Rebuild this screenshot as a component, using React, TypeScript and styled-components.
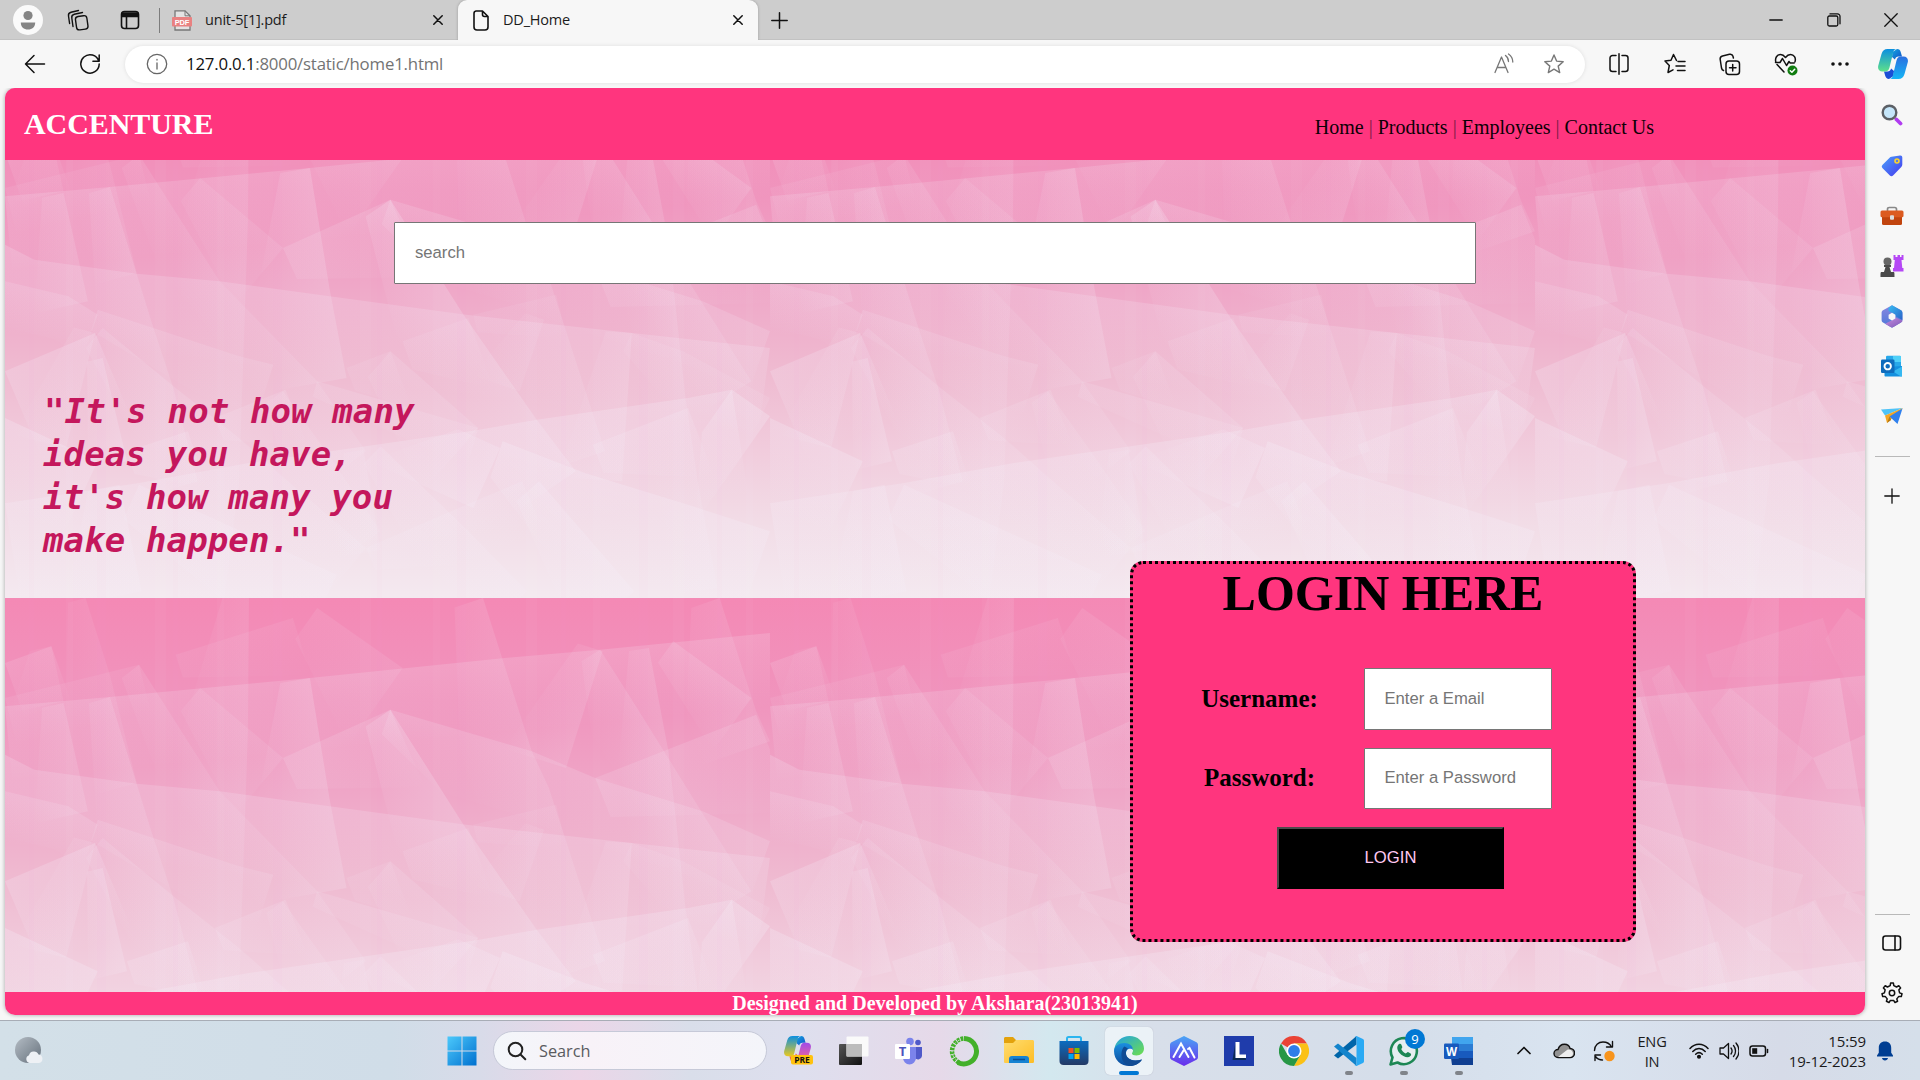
import React from 'react';
import styled, { createGlobalStyle } from 'styled-components';

const UI = '"Open Sans", "Noto Sans", sans-serif';
const SERIF = '"Liberation Serif", "Times New Roman", serif';
const SANS = '"Liberation Sans", Arial, sans-serif';
const HOT = '#ff357e';

/* ---------- faceted background tile ---------- */

// Each crease is a polyline with a highlight fading away below/left of it.
interface Crease {
  pts: number[];
  w: number;
  o?: number;
}

const creases: Crease[] = [
  // broad horizontal bands
  { pts: [0, 325, 215, 297, 625, 240, 1025, 180, 1220, 155, 1568, 105], w: 150, o: 0.22 },
  { pts: [0, 470, 60, 515, 270, 557, 440, 580, 665, 625, 945, 680, 1285, 735, 1568, 780], w: 180, o: 0.26 },
  { pts: [0, 1246, 272, 1186, 497, 1126, 732, 1076, 960, 1028, 1090, 995, 1400, 930, 1490, 905], w: 220, o: 0.32 },
  { pts: [0, 580, 130, 625, 190, 680], w: 90 },
  { pts: [190, 665, 480, 805, 550, 830], w: 110 },
  { pts: [0, 990, 190, 1120], w: 170, o: 0.34 },
  { pts: [790, 335, 940, 400, 1080, 460, 1210, 540, 1430, 640, 1568, 730], w: 130, o: 0.2 },
  { pts: [640, 880, 970, 1020], w: 80 },
  { pts: [1020, 1060, 1190, 1156, 1400, 1250, 1568, 1330], w: 190, o: 0.36 },
  { pts: [1285, 735, 1390, 790, 1568, 930], w: 100, o: 0.12 },
  { pts: [1490, 905, 1568, 985], w: 260, o: 0.36 },
  { pts: [1370, 130, 1530, 300], w: 130 },
  // rising edges
  { pts: [0, 195, 95, 145], w: 120 },
  { pts: [0, 300, 275, 200], w: 100, o: 0.1 },
  { pts: [350, 170, 590, 60], w: 120, o: 0.1 },
  { pts: [570, 480, 790, 335], w: 170 },
  { pts: [1210, 540, 1540, 350], w: 210 },
  { pts: [0, 850, 185, 735], w: 190, o: 0.28 },
  { pts: [250, 1090, 375, 1030], w: 120, o: 0.24 },
  { pts: [430, 990, 575, 905], w: 120 },
  { pts: [700, 840, 790, 790], w: 120, o: 0.12 },
  { pts: [815, 760, 950, 690], w: 150, o: 0.12 },
  { pts: [960, 680, 1130, 620], w: 90, o: 0.1 },
  { pts: [1205, 1070, 1400, 960], w: 150, o: 0.24 },
  { pts: [740, 1380, 930, 1260, 1060, 1180], w: 120, o: 0.2 },
  // long steep creases
  { pts: [95, 145, 120, 310], w: 110, o: 0.1 },
  { pts: [120, 315, 170, 640], w: 110 },
  { pts: [215, 297, 300, 700, 345, 900, 395, 1180], w: 110 },
  { pts: [165, 0, 215, 230, 270, 555], w: 90, o: 0.1 },
  { pts: [500, 0, 498, 400, 480, 1180, 450, 1530], w: 130, o: 0.14 },
  { pts: [625, 240, 665, 600, 700, 870], w: 150, o: 0.24 },
  { pts: [400, 270, 570, 480], w: 150, o: 0.12 },
  { pts: [275, 200, 440, 580, 640, 880, 740, 1090], w: 110, o: 0.14 },
  { pts: [790, 335, 940, 680, 1090, 995, 1170, 1150], w: 150, o: 0.28 },
  { pts: [980, 0, 1080, 460, 1115, 570, 1230, 1090], w: 150, o: 0.16 },
  { pts: [1220, 155, 1300, 340, 1440, 670, 1530, 880], w: 110, o: 0.16 },
  { pts: [1225, 160, 1150, 510], w: 130, o: 0.16 },
  { pts: [1320, 150, 1360, 460, 1395, 930, 1420, 1180, 1460, 1500], w: 100, o: 0.18 },
  { pts: [1465, 0, 1540, 340, 1568, 430], w: 150, o: 0.14 },
  { pts: [640, 30, 815, 210], w: 190, o: 0.12 },
  { pts: [1285, 735, 1265, 1180], w: 130, o: 0.2 },
  { pts: [1105, 695, 1055, 910], w: 100, o: 0.12 },
  { pts: [790, 790, 970, 1020], w: 170, o: 0.17 },
  { pts: [185, 735, 125, 1080], w: 110, o: 0.18 },
  { pts: [200, 810, 250, 1120], w: 80, o: 0.28 },
  { pts: [200, 720, 350, 900, 480, 1050, 580, 1180, 740, 1380], w: 130, o: 0.18 },
  { pts: [570, 910, 660, 1095, 770, 1330], w: 100, o: 0.15 },
  { pts: [1015, 1080, 960, 1260], w: 230, o: 0.3 },
  { pts: [770, 1075, 950, 1330, 1070, 1510], w: 120, o: 0.22 },
  { pts: [735, 1085, 770, 1386], w: 100, o: 0.16 },
  { pts: [235, 1190, 280, 1510], w: 160, o: 0.28 },
  { pts: [1095, 1180, 1290, 1510], w: 150, o: 0.32 },
  { pts: [275, 1190, 680, 1460], w: 190, o: 0.28 },
];

const streaks = [24, 61, 92, 150, 168, 212, 268, 355, 372, 428, 452, 521, 556, 588, 634, 668, 712, 741];

const f = (n: number) => n.toFixed(1);

const drawCrease = ({ pts, w, o = 0.18 }: Crease, i: number) => {
  const p: [number, number][] = [];
  for (let k = 0; k < pts.length; k += 2) p.push([pts[k] / 2.05, pts[k + 1] / 3]);
  const [ax, ay] = p[0];
  const [bx, by] = p[p.length - 1];
  const len = Math.hypot(bx - ax, by - ay);
  const nx = (-(by - ay) / len) * (w / 2);
  const ny = ((bx - ax) / len) * (w / 2);
  // The strip starts narrower than it ends, as a facet opening downwards.
  const far = p.map(([x, y], k) => {
    const t = k === 0 && ax > 0 ? 0.4 : 1;
    return [x + nx * t, y + ny * t];
  });
  const outline = [...p, ...far.reverse()].map(([x, y]) => `${f(x)},${f(y)}`).join(' ');
  const c = '#f5eef8';
  return `<linearGradient id="g${i}" gradientUnits="userSpaceOnUse" x1="${f(ax)}" y1="${f(ay)}" x2="${f(ax + nx)}" y2="${f(ay + ny)}"><stop offset="0" stop-color="${c}" stop-opacity="${f3(o * 0.78)}"/><stop offset="1" stop-color="${c}" stop-opacity="0"/></linearGradient><polygon points="${outline}" fill="url(#g${i})"/>`;
};

function f3(n: number) {
  return n.toFixed(3);
}

const tileSvg = `<svg xmlns="http://www.w3.org/2000/svg" width="765" height="510" viewBox="0 0 765 510"><defs>
<linearGradient id="b" x1="0" y1="0" x2="0" y2="1"><stop offset="0" stop-color="#f489b5"/><stop offset=".2" stop-color="#f094bd"/><stop offset=".38" stop-color="#efa6c7"/><stop offset=".56" stop-color="#efbbd1"/><stop offset=".72" stop-color="#f1cddd"/><stop offset=".86" stop-color="#f2dde7"/><stop offset="1" stop-color="#f4e9f0"/></linearGradient>
</defs><rect width="765" height="510" fill="url(#b)"/>
${creases.map(drawCrease).join('')}
${streaks.map((x, i) => `<rect x="${x}" width="${5 + (i % 4) * 2}" height="510" fill="${i % 2 ? '#fff' : '#ea86b4'}" opacity="0.025"/>`).join('')}
</svg>`;

const tileUrl = `url("data:image/svg+xml,${encodeURIComponent(tileSvg)}")`;

/* ---------- layout ---------- */

const GlobalStyle = createGlobalStyle`
  * { box-sizing: border-box; }
  body { margin: 0; background: #f7f7f7; overflow: hidden; }
  svg { display: block; flex: none; }
`;

const Screen = styled.div`
  width: 1920px;
  height: 1080px;
  display: flex;
  flex-direction: column;
  background: #f7f7f7;
  font-family: ${UI};
  overflow: hidden;
`;

const Slot = styled.div<{ $w: number; $ml?: number; $mr?: number }>`
  width: ${(p) => p.$w}px;
  margin-left: ${(p) => p.$ml ?? 0}px;
  margin-right: ${(p) => p.$mr ?? 0}px;
  flex: none;
  display: flex;
  align-items: center;
  justify-content: center;
`;

const Spacer = styled.div`flex: 1;`;

const TabBar = styled.div`
  height: 40px;
  flex: none;
  display: flex;
  align-items: center;
  background: #cdcdcd;
  box-shadow: inset 0 -1px 0 #c2c2c2;
`;

const TabDivider = styled.div`
  width: 1px;
  height: 25px;
  background: #7c7c7c;
  margin-left: -2px;
`;

const Tab = styled.div<{ $active?: boolean }>`
  width: ${(p) => (p.$active ? 300 : 298)}px;
  height: 40px;
  display: flex;
  align-items: center;
  padding: 0 15px 0 ${(p) => (p.$active ? 14 : 12)}px;
  gap: 13px;
  background: ${(p) => (p.$active ? '#f7f7f7' : 'transparent')};
  border-radius: 9px 9px 0 0;
  box-shadow: ${(p) => (p.$active ? '0 0 3px rgba(0,0,0,.25)' : 'none')};
  color: #1b1b1b;
  font-size: 14.5px;
  letter-spacing: -0.2px;
`;

const TabTitle = styled.span`flex: 1; white-space: nowrap; padding-bottom: 2px;`;

const Toolbar = styled.div`
  height: 48px;
  flex: none;
  display: flex;
  align-items: center;
  background: #f7f7f7;
  position: relative;
`;

const AddressBar = styled.div`
  width: 1460px;
  height: 37px;
  margin-left: 7px;
  border-radius: 19px;
  background: #fff;
  box-shadow: 0 0 4px rgba(0, 0, 0, 0.1);
  display: flex;
  align-items: center;
  padding-left: 21px;
`;

const Url = styled.div`
  flex: 1;
  margin-left: 18px;
  padding-bottom: 2px;
  font-size: 16.8px;
  letter-spacing: -0.18px;
  color: #737373;
  b { font-weight: 400; color: #111; }
`;

const Workspace = styled.div`
  height: 932px;
  flex: none;
  display: flex;
  padding-left: 5px;
`;

const Page = styled.div`
  width: 1860px;
  height: 927px;
  display: flex;
  flex-direction: column;
  border-radius: 10px;
  overflow: hidden;
  background-image: ${tileUrl};
  background-size: 765px 510px;
  box-shadow: 0 0 4px rgba(0, 0, 0, 0.35);
  font-family: ${SERIF};
`;

const Header = styled.header`
  height: 72px;
  flex: none;
  background: ${HOT};
  display: flex;
  align-items: baseline;
  padding: 19px 211px 0 19px;
  justify-content: space-between;
`;

const Brand = styled.h2`
  margin: 0;
  font-size: 30px;
  line-height: 34px;
  letter-spacing: -0.07px;
  color: #fff;
`;

const Nav = styled.nav`
  font-size: 20px;
  color: #0c0006;
  i { font-style: normal; color: #7b1c48; }
`;

const Main = styled.main`
  height: 832px;
  flex: none;
  display: flex;
  flex-direction: column;
`;

const TextField = styled.input<{ $w: number; $h: number }>`
  width: ${(p) => p.$w}px;
  height: ${(p) => p.$h}px;
  padding: 0 19px 1px 20px;
  border: 1px solid #767676;
  border-radius: 1px;
  background: #fff;
  font: 16.67px ${SANS};
  outline: none;
  &::placeholder { color: #757575; opacity: 1; }
`;

const SearchRow = styled.div`
  padding: 62px 0 0 389px;
  height: 124px;
`;

const Quote = styled.p`
  margin: 106px 0 0 38px;
  height: 171px;
  font: italic bold 34px/43px "DejaVu Sans Mono", monospace;
  letter-spacing: 0.12px;
  text-indent: 1px;
  color: #c4175c;
  white-space: pre;
`;

const LoginCard = styled.form`
  width: 506px;
  height: 381px;
  margin-left: 1125px;
  border: 3px dotted #000;
  border-radius: 13px;
  background: ${HOT};
  display: flex;
  flex-direction: column;
  align-items: center;
`;

const LoginTitle = styled.h1`
  margin: 0 0 46px;
  font-size: 50px;
  line-height: 58px;
  color: #000;
`;

const Fields = styled.div`
  display: grid;
  grid-template-columns: 140px 188px;
  column-gap: 35px;
  row-gap: 18px;
  align-items: center;
  margin-right: 26px;
`;

const Label = styled.label`
  padding: 0 0 1px 2px;
  text-align: center;
  font-size: 25px;
  font-weight: bold;
  color: #000;
`;

const LoginButton = styled.button`
  width: 227px;
  height: 62px;
  margin: 18px 0 0 15px;
  padding: 0;
  background: #000;
  border: 2px solid #000;
  border-top-color: #4c4c4c;
  border-left-color: #4c4c4c;
  font: 16.67px ${SANS};
  color: #ffc8f0;
`;

const Footer = styled.footer`
  height: 23px;
  flex: none;
  background: ${HOT};
  color: #fff;
  font-weight: bold;
  font-size: 20px;
  line-height: 23px;
  text-align: center;
`;

const Sidebar = styled.aside`
  flex: 1;
  display: flex;
  flex-direction: column;
  align-items: center;
  height: 932px;
  padding-right: 1px;
`;

const SideSlot = styled.div<{ $h?: number }>`
  height: ${(p) => p.$h ?? 50}px;
  display: flex;
  align-items: center;
`;

const SideRule = styled.div<{ $mt?: number }>`
  width: 35px;
  height: 1px;
  margin-top: ${(p) => p.$mt ?? 0}px;
  background: #b9b9b9;
`;

const Taskbar = styled.div`
  height: 60px;
  flex: none;
  display: flex;
  align-items: center;
  border-top: 1px solid #a8adb6;
  background: linear-gradient(90deg, #d3e0e8 0, #d0dde8 390px, #d8dbe9 480px, #ebd6e8 580px, #d9deea 690px, #dedfee 800px, #e6d9e9 940px, #d3e8ef 1050px, #d8dfea 1150px, #d5deea 1400px, #d9e4f0 1570px, #d6dbe8 1780px, #d5dfea 1920px);
`;

const StartSpace = styled.div`width: 434px; padding-left: 15px;`;

const SearchPill = styled.div`
  width: 274px;
  height: 39px;
  margin: 0 4px;
  padding-left: 13px;
  border-radius: 20px;
  border: 1px solid #c6c9d8;
  background: linear-gradient(90deg, #f3f6fa, #f8f2f8 35%, #f4f5fa);
  display: flex;
  align-items: center;
  gap: 12px;
  font-size: 16.3px;
  color: #5a5b60;
`;

const TaskButton = styled.div<{ $active?: boolean; $running?: boolean }>`
  width: ${(p) => (p.$active ? 48 : 55)}px;
  margin: 0 ${(p) => (p.$active ? 3.5 : 0)}px;
  height: 48px;
  flex: none;
  display: grid;
  place-items: center;
  position: relative;
  border-radius: 5px;
  background: ${(p) => (p.$active ? '#ebf2f7' : 'transparent')};
  box-shadow: ${(p) => (p.$active ? '0 0 1px #aab' : 'none')};
  &::after {
    content: '';
    display: ${(p) => (p.$active || p.$running ? 'block' : 'none')};
    position: absolute;
    bottom: 0;
    width: ${(p) => (p.$active ? 20 : 8)}px;
    height: 4px;
    border-radius: 2px;
    background: ${(p) => (p.$active ? '#0078d4' : '#80848a')};
  }
`;

const Badge = styled.span`
  position: absolute;
  top: 2px;
  right: 6px;
  width: 20px;
  height: 20px;
  border-radius: 50%;
  background: #0078d4;
  color: #fff;
  font-size: 13px;
  line-height: 20px;
  text-align: center;
`;

const Language = styled.div`
  width: 50px;
  margin-left: 3px;
  font-size: 14.6px;
  line-height: 20px;
  letter-spacing: -0.2px;
  text-align: center;
  color: #1a1a1a;
`;

const Clock = styled.div`
  width: 86px;
  display: flex;
  flex-direction: column;
  align-items: flex-end;
  font-size: 15px;
  line-height: 20px;
  letter-spacing: -0.1px;
  white-space: nowrap;
  color: #1a1a1a;
`;

/* ---------- icons ---------- */

interface GlyphProps {
  w?: number;
  h?: number;
  sw?: number;
  c?: string;
  children: React.ReactNode;
}

const Line = ({ w = 24, h = w, sw = 1.4, c = '#111', children }: GlyphProps) => (
  <svg width={w} height={h} viewBox={`0 0 ${w} ${h}`} fill="none" stroke={c} strokeWidth={sw} strokeLinecap="round" strokeLinejoin="round">
    {children}
  </svg>
);

const Art = ({ w = 30, h = w, children }: GlyphProps) => (
  <svg width={w} height={h} viewBox={`0 0 ${w} ${h}`}>{children}</svg>
);

const Grad = ({ id, from, to, v }: { id: string; from: string; to: string; v?: boolean }) => (
  <linearGradient id={id} x1="0" y1="0" x2={v ? '0' : '1'} y2="1">
    <stop offset="0" stopColor={from} />
    <stop offset="1" stopColor={to} />
  </linearGradient>
);

const CloseX = () => <Line w={10} sw={1.5}><path d="M.8.8l8.4 8.4M9.2.8.8 9.2" /></Line>;

const Copilot = ({ size, pre }: { size: number; pre?: boolean }) => {
  const k = pre ? 'pre' : 'side';
  return (
    <svg width={size} height={size} viewBox="0 0 30 30">
      <defs>
        <Grad id={`${k}a`} from="#0b8fe0" to={pre ? '#e8c820' : '#5ee08a'} v />
        <Grad id={`${k}b`} from={pre ? '#a04be8' : '#2a6fe0'} to={pre ? '#ff6a8a' : '#17b6f5'} v />
        <Grad id={`${k}c`} from="#12a5e0" to="#1450c8" />
      </defs>
      <path d="M19 0c2.200 0 3.200 1.200 3.800 3.200L24 7.500h-3.500c-2 0-3 1-3.600 3L14 8l.5-5z" fill={`url(#${k}c)`} />
      <path d="M11 30c-2.200 0-3.200-1.200-3.800-3.200L6 22.500h3.500c2 0 3-1 3.600-3L16 22l-.5 5z" fill={pre ? '#f07050' : '#1b4fd6'} />
      <path d="M9.500 0H19c-2.200 0-3.200 1-3.800 3.200L11.500 18.500c-.7 2.800-2 4-4.500 4H4.500C1 22.500-.6 20 .3 16.500L3.500 5C4.500 1.500 6.500 0 9.500 0z" fill={`url(#${k}a)`} />
      <path d="M20.500 30H11c2.200 0 3.200-1 3.800-3.200l3.700-15.300c.7-2.800 2-4 4.500-4h2.500c3.500 0 5.100 2.500 4.200 6L26.500 25c-1 3.500-3 5-6 5z" fill={`url(#${k}b)`} />
    </svg>
  );
};

const GEAR = Array.from({ length: 7 }, (_, i) => {
  const point = (r: number, turn: number) => {
    const a = ((i + turn) / 7) * Math.PI * 2;
    return `${(11 + r * Math.sin(a)).toFixed(1)},${(11 - r * Math.cos(a)).toFixed(1)}`;
  };
  return [point(7.6, -0.27), point(10, -0.16), point(10, 0.16), point(7.6, 0.27)].join(' ');
}).join(' ');

const star = 'M11 2l2.600 6.100 6.600.6-5 4.400 1.500 6.500L11 16.200l-5.700 3.400 1.500-6.500-5-4.400 6.600-.6z';

/* ---------- sections ---------- */

const BrowserTabs = () => (
  <TabBar>
    <Slot $w={56}>
      <Art w={30}><circle cx="15" cy="15" r="15" fill="#fafafa" /><circle cx="15" cy="10.500" r="4.600" fill="#858585" /><path d="M7.800 17.500h14.400c0 4.500-3 7-7.200 7s-7.200-2.500-7.200-7z" fill="#858585" /></Art>
    </Slot>
    <Slot $w={43}>
      <Line w={22} sw={1.4}><rect x="9" y="7" width="11.500" height="13.500" rx="3" transform="rotate(-8 15 14)" /><path d="M6 17.500 4.800 9c-.3-2 .6-3.200 2.500-3.700l8.200-1.800M2.600 14.500 1.500 7c-.3-2 .6-3.200 2.500-3.700L11.500 1.500" /></Line>
    </Slot>
    <Slot $w={62}>
      <Line w={20} sw={1.6}><rect x="1.500" y="1.500" width="17" height="17" rx="3" /><path d="M2 3h16v3.500H2z" fill="#111" /><path d="M6.500 7v11" /></Line>
    </Slot>
    <TabDivider />
    <Tab>
      <Art w={20} h={21}><path d="M3 .8h10l5 5V20H3z" fill="#e3e3e3" stroke="#777" strokeWidth="1.3" /><path d="M13 .8v5h5" fill="none" stroke="#777" /><rect y="7" width="20" height="9.5" rx="1" fill="#e98181" /><text x="10" y="14.7" fontSize="7.5" fontWeight="bold" fill="#fff" textAnchor="middle" fontFamily="Liberation Sans">PDF</text></Art>
      <TabTitle>unit-5[1].pdf</TabTitle>
      <CloseX />
    </Tab>
    <Tab $active>
      <Line w={18} h={21} sw={1.6}><path d="M4 1h6.500L16 6.500V17a3 3 0 0 1-3 3H5a3 3 0 0 1-3-3V3.500A2.500 2.500 0 0 1 4 1zM10.500 1v3.500a2 2 0 0 0 2 2H16" /></Line>
      <TabTitle>DD_Home</TabTitle>
      <CloseX />
    </Tab>
    <Slot $w={42}><Line w={17} sw={1.5}><path d="M8.500.8v15.400M.8 8.500h15.400" /></Line></Slot>
    <Spacer />
    <Slot $w={58}><Line w={14} sw={1.3}><path d="M.8 7h12.400" /></Line></Slot>
    <Slot $w={57}><Line w={14} sw={1.3}><rect x=".8" y="3" width="10" height="10" rx="1.5" /><path d="M3 .9h7.500A2.500 2.500 0 0 1 13 3.400v7.400" /></Line></Slot>
    <Slot $w={58}><Line w={14} sw={1.3}><path d="M.8.8l12.400 12.400M13.200.8.8 13.200" /></Line></Slot>
  </TabBar>
);

const BrowserToolbar = () => (
  <Toolbar>
    <Slot $w={70}><Line w={22} sw={1.5}><path d="M1.500 11h19M10 2.500 1.500 11l8.500 8.500" /></Line></Slot>
    <Slot $w={40} $mr={8}><Line w={22} sw={1.5}><path d="M19.800 8.200A9.200 9.200 0 1 0 20.200 11M20.200 2v6.300h-6.300" /></Line></Slot>
    <AddressBar>
      <Line w={22} c="#666" sw={1.3}><circle cx="11" cy="11" r="9.7" /><path d="M11 10v6M11 6.500v.5" /></Line>
      <Url><b>127.0.0.1</b>:8000/static/home1.html</Url>
      <Slot $w={50}><Line w={22} c="#777" sw={1.3}><path d="M2 19.500 8.500 4 15 19.500M4.500 14.500h8M12.500 2.500c2 1.500 3 3.700 3 6M15.500 1c2.800 1.900 4.300 4.500 4.300 8" /></Line></Slot>
      <Slot $w={50} $mr={6}><Line w={22} c="#777"><path d={star} /></Line></Slot>
    </AddressBar>
    <Slot $w={68}><Line w={22} sw={1.5}><path d="M8 2.500H4.500a2.500 2.500 0 0 0-2.500 2.500v11a2.500 2.500 0 0 0 2.500 2.500H8M14 2.500h3.500A2.500 2.500 0 0 1 20 5v11a2.500 2.500 0 0 1-2.500 2.500H14M11 .8v20.400" /></Line></Slot>
    <Slot $w={43}><Line w={22} sw={1.5}><path d="M12.500 7.500 9.500 1.500 7 7.200l-6 .8 4.300 4.500L4 19.500l5-2.700M14 8.500h7M12 13h9M13.500 17.500H21" /></Line></Slot>
    <Slot $w={68}><Line w={22} h={23} sw={1.5}><rect x="7" y="8" width="13.5" height="13.5" rx="3" /><path d="M13.700 11.500v6.500M10.500 14.700H17M4.500 17.500c-1.500-.5-1.800-1.500-2-2.500L1.200 6.500c-.3-2 .6-3 2.300-3.500l7-1.700c1.800-.4 3 .3 3.500 2l.4 1.700" /></Line></Slot>
    <Slot $w={43}><Line w={24} h={24} sw={1.5}><path d="M10 20 3 12.500M1.800 10C.8 6 3 2.500 6.500 2.500c2 0 3.500 1 5 3 1.500-2 3-3 5-3 3.500 0 5.700 3.500 4.500 7.200M1.500 10.500H6l2.500-4 4 7 2.500-4 1.200 1.500h4" /><circle cx="18.5" cy="18.5" r="5" fill="#107c10" stroke="none" /><path d="M16.300 18.700l1.600 1.500 2.800-3" stroke="#fff" /></Line></Slot>
    <Slot $w={66}><Line w={18} h={4} sw={0}><circle cx="2" cy="2" r="1.8" fill="#111" /><circle cx="9" cy="2" r="1.8" fill="#111" /><circle cx="16" cy="2" r="1.8" fill="#111" /></Line></Slot>
    <Slot $w={40}><Copilot size={30} /></Slot>
  </Toolbar>
);

const EdgeSidebar = () => (
  <Sidebar>
    <SideSlot $h={53}><Art w={22}><circle cx="8.5" cy="8.5" r="6.8" fill="#c5e6fa" stroke="#5c6066" strokeWidth="2.4" /><path d="M13.500 13.500 16 16" stroke="#777" strokeWidth="2" /><path d="m15.500 15.500 4 4" stroke="#b03cf0" strokeWidth="3.8" strokeLinecap="round" /></Art></SideSlot>
    <SideSlot><Art w={22}><defs><Grad id="tag" from="#4aa2fa" to="#4638ee" /></defs><path d="m10.500 1.800 8.500-1.300c1.500-.2 2.300.6 2.300 2v7c0 1-.3 1.700-1 2.400l-8 8.400c-1.200 1.200-2.500 1.200-3.700 0l-7-7c-1.200-1.200-1.100-2.300 0-3.500l7-7c.6-.6 1.100-.9 1.900-1z" fill="url(#tag)" /><circle cx="16" cy="6" r="2" fill="#5b7fe0" stroke="#fbd32c" strokeWidth="1.6" /></Art></SideSlot>
    <SideSlot><Art w={24} h={20}><path d="M7.500 5V3.200C7.500 2 8.200 1.500 9.200 1.500h5.600c1 0 1.700.5 1.700 1.700V5" fill="none" stroke="#888" strokeWidth="1.7" /><rect x="2" y="9" width="20" height="10" rx="1.5" fill="#c1440e" /><rect x=".5" y="4.5" width="23" height="6.8" rx="1.5" fill="#dc5b20" /><rect x="10" y="9.3" width="4" height="4.5" rx="1" fill="#ddd" /></Art></SideSlot>
    <SideSlot><Art w={24}><path d="M13.500 1h2v2h2V1h2.500v2h1.500V1h2v5h-2l.8 8h1.200v3.500H13V14h1l.8-8h-1.300z" fill="#b548f5" /><circle cx="7.5" cy="7.5" r="4" fill="#666" /><path d="M4 11h7v2H9.500l1.500 5h2.500c1 0 1 .5 1 5H.5c0-4.500 0-5 1-5H4l1.500-5H4z" fill="#4a4a4a" /></Art></SideSlot>
    <SideSlot><Art w={22} h={23}><defs><Grad id="ma" from="#8a86e0" to="#4a78d8" v /><Grad id="mb" from="#38bdf2" to="#2a62c8" /><Grad id="mc" from="#c48ee0" to="#8058b8" /></defs><path d="M11 .3 20 5.300c1 .6 1.400 1.500 1.400 2.700v7c0 1-.5 2-1.400 2.500L11 22.800 2 17.500C1 17 .6 16 .6 15V8c0-1.200.4-2.100 1.400-2.700z" fill="url(#ma)" /><path d="M11 .3 20 5.300c1 .6 1.400 1.500 1.400 2.700v7L15 11.500 13.500 9 7.500 6V3z" fill="url(#mb)" /><path d="m4 18.700 7-3.500 4-2.500 6.400 2.800c0 1-.5 1.500-1.400 2L12.500 22c-1 .6-2 .6-3 0z" fill="url(#mc)" /><path d="m11 7.800 3.400 1.900v3.800L11 15.400l-3.400-1.900V9.700z" fill="#f7f7f7" /></Art></SideSlot>
    <SideSlot><Art w={22} h={22}><rect x="5" y=".7" width="15" height="17" rx="1.2" fill="#28a8ea" /><path d="M12 1h8v6h-8z" fill="#4fd0f8" /><path d="M3.500 12 21 11v9.500c0 .6-.4 1-1 1H4.500c-.6 0-1-.4-1-1z" fill="#1490df" /><path d="m21 11.500-9 5 8 5h1z" fill="#35b8f1" /><rect y="4.5" width="13.5" height="13.5" rx="1.2" fill="#0f6cbd" /><circle cx="6.7" cy="11.2" r="3.2" fill="none" stroke="#fff" strokeWidth="1.9" /></Art></SideSlot>
    <SideSlot><Art w={24} h={18}><path d="M1 2.500 23 1 5 8.500z" fill="#4fc3f7" /><path d="M5 8.500 23 1 7 16z" fill="#f5a623" /><path d="m9.500 9.500 13-8-5 15.500z" fill="#2f80ed" /><path d="M9.500 9.500 7 16l4.200-3z" fill="#b97a10" /></Art></SideSlot>
    <SideRule $mt={15} />
    <SideSlot $h={78}><Line w={16} sw={1.3}><path d="M8 .8v14.400M.8 8h14.400" /></Line></SideSlot>
    <Spacer />
    <SideRule />
    <SideSlot $h={55}><Line w={20} h={16} sw={1.6}><rect x="1" y="1" width="17.5" height="14" rx="2.5" /><path d="M13 1v14" /></Line></SideSlot>
    <SideSlot $h={46}><Line w={22} sw={1.5}><polygon points={GEAR} /><circle cx="11" cy="11" r="2.7" /></Line></SideSlot>
    <SideSlot $h={4} />
  </Sidebar>
);

const WebPage = () => (
  <Page>
    <Header>
      <Brand>ACCENTURE</Brand>
      <Nav>Home <i>|</i> Products <i>|</i> Employees <i>|</i> Contact Us</Nav>
    </Header>
    <Main>
      <SearchRow><TextField $w={1082} $h={62} placeholder="search" /></SearchRow>
      <Quote>{`"It's not how many\nideas you have,\nit's how many you\nmake happen."`}</Quote>
      <LoginCard>
        <LoginTitle>LOGIN HERE</LoginTitle>
        <Fields>
          <Label>Username:</Label>
          <TextField $w={188} $h={62} placeholder="Enter a Email" />
          <Label>Password:</Label>
          <TextField $w={188} $h={61} placeholder="Enter a Password" />
        </Fields>
        <LoginButton type="button">LOGIN</LoginButton>
      </LoginCard>
    </Main>
    <Footer>Designed and Developed by Akshara(23013941)</Footer>
  </Page>
);

const WindowsTaskbar = () => (
  <Taskbar>
    <StartSpace><Art w={28}><defs><Grad id="moon" from="#b4bcc4" to="#66717c" /></defs><circle cx="13" cy="13" r="13" fill="url(#moon)" /><path d="M14.500 26a4 4 0 0 1-.5-7.700 5 5 0 0 1 9.500-.8 4.300 4.300 0 0 1 .5 8.500z" fill="#eef1f5" /></Art></StartSpace>
    <TaskButton><Art w={30}><defs><Grad id="win" from="#4cc9fb" to="#0070cf" /></defs><path d="M.5.5h14v14H.5zM15.500.5h14v14h-14zM.5 15.500h14v14H.5zM15.500 15.500h14v14h-14z" fill="url(#win)" /></Art></TaskButton>
    <SearchPill>
      <Line w={20} c="#222" sw={2}><circle cx="8.5" cy="8.5" r="6.8" /><path d="m13.500 13.500 4.800 4.800" /></Line>
      Search
    </SearchPill>
    <TaskButton><Art w={30} h={30}><Copilot size={27} pre /><rect x="7" y="19" width="22" height="9.5" rx="2" fill="#ffc20e" /><text x="18" y="26.8" fontSize="8.5" fontWeight="bold" textAnchor="middle" fontFamily="Open Sans" fill="#111">PRE</text></Art></TaskButton>
    <TaskButton><Art w={30}><defs><Grad id="tv" from="#555" to="#111" /></defs><rect y="8" width="23" height="21" rx="1" fill="url(#tv)" /><rect x="7.5" y=".5" width="22" height="20" rx="1" fill="#fafafa" /><path d="M7.500 8H23v12.500H7.500z" fill="#bcbcbc" /></Art></TaskButton>
    <TaskButton><Art w={28}><circle cx="15" cy="4.5" r="3.8" fill="#7b83eb" /><circle cx="23" cy="5.5" r="2.8" fill="#5059c9" /><path d="M20 10h7v9a4 4 0 0 1-7 2z" fill="#5059c9" /><path d="M8 10h13v11a6.500 6.500 0 0 1-13 0z" fill="#7b83eb" /><rect x="0" y="7" width="15" height="15" rx="1" fill="#fff" /><text x="7.5" y="19" fontSize="13" fontWeight="bold" textAnchor="middle" fontFamily="Open Sans" fill="#4b53bc">T</text></Art></TaskButton>
    <TaskButton><Art w={32}><path d="M16 3.500a12.700 12.700 0 1 1-6 24" fill="none" stroke="#43b02a" strokeWidth="5" /><path d="M11 27.500A12.700 12.700 0 0 1 16 3.500" fill="none" stroke="#43b02a" strokeWidth="4.500" strokeDasharray="2.800 .9" /><path d="M8.500 25A11.500 11.500 0 0 1 14 4.500" fill="none" stroke="#dfe3ee" strokeWidth="1" strokeDasharray="1.500 3" /></Art></TaskButton>
    <TaskButton><Art w={30} h={28}><defs><Grad id="fo" from="#ffdd70" to="#fdbd25" /></defs><path d="M0 1.500C0 .7.600 0 1.500 0H9l3 3h13v6H0z" fill="#e3a20c" /><path d="M0 6h9l3-3h16.500c.8 0 1.500.7 1.500 1.500v20c0 1-.7 1.500-1.500 1.500h-27C.6 26 0 25.500 0 24.500z" fill="url(#fo)" /><path d="M5 26v-4a3 3 0 0 1 3-3h14a3 3 0 0 1 3 3v4z" fill="#1683d2" /><path d="M9 22.500h12" stroke="#0b4f93" strokeWidth="1.5" /></Art></TaskButton>
    <TaskButton><Art w={30} h={30}><defs><Grad id="st" from="#0b6cc0" to="#243a66" v /></defs><path d="M8 6V2.500C8 1.700 8.500 1 9.500 1h11c1 0 1.500.7 1.500 1.500V6" fill="none" stroke="#2bb5ef" strokeWidth="2" /><path d="M.5 5h29v20c0 2.500-1.500 4-4 4h-21c-2.500 0-4-1.500-4-4z" fill="url(#st)" /><path d="M9.500 12H14.500v5H9.500z" fill="#f25022" /><path d="M15.500 12h5v5h-5z" fill="#7fba00" /><path d="M9.500 18h5v5h-5z" fill="#00a4ef" /><path d="M15.500 18h5v5h-5z" fill="#ffb900" /></Art></TaskButton>
    <TaskButton $active><Art w={30}><defs><Grad id="e1" from="#1fa0e8" to="#6fe04a" /><Grad id="e2" from="#1b8fe0" to="#0c4a9a" v /></defs><path d="M.5 12C2 5 8 0 15.500 0 23.500 0 30 5.500 30 12.500c0 4-3.200 7-7.500 7-3 0-4.500-1-4.500-2 0-.9 1-1.300 1-3.300 0-2.700-2.700-5-6.500-5C7 9.200 2.500 11 .5 14z" fill="url(#e1)" /><path d="M0 15c0-5 5-8 10.500-8 5 0 8.500 3 8.500 7-1.500-2.200-7-2-7 3.500C12 23 18 26 28 23.500 25.500 27.500 21 30 15.500 30 7 30 0 24 0 15z" fill="url(#e2)" /><path d="M10.500 10.500C6.500 13 5 27 15.500 30c5.500 0 10-2.500 12.500-6.500-9 3-15.500-1-16-5.500-.3-2.700.5-4.500 2-5.500z" fill="#114c94" /></Art></TaskButton>
    <TaskButton><Art w={28} h={30}><defs><Grad id="ai" from="#4aa5f5" to="#6a2cec" v /></defs><path d="M14 0l12 6c1.300.7 2 1.500 2 3v12c0 1.500-.7 2.300-2 3l-12 6-12-6c-1.300-.7-2-1.500-2-3V9c0-1.500.7-2.300 2-3z" fill="url(#ai)" /><path d="M3.500 21 11 7.500l7.500 13.500M9.500 21l4-6.500M18 13l1.500-1 5 9.500" fill="none" stroke="#fff" strokeWidth="2" strokeLinecap="round" /></Art></TaskButton>
    <TaskButton><Art w={30}><rect width="30" height="30" fill="#1f3cab" /><path d="m11.500 6-3 18H22l-.5-3-10 1z" fill="#0b2a55" /><path d="M11.500 6h4v12.500H22v3.500H11.500z" fill="#fff" /></Art></TaskButton>
    <TaskButton><Art w={30}><path d="M15 15 2 7.500A15 15 0 0 1 28 7.500H15z" fill="#ea4335" /><path d="M15 7.500h13A15 15 0 0 1 15 30l6.500-11.200z" fill="#fbc116" /><path d="M2 7.500A15 15 0 0 0 15 30l6.500-11.200L15 22l-6.500-3.200z" fill="#279746" /><circle cx="15" cy="15" r="7.5" fill="#fff" /><circle cx="15" cy="15" r="5.9" fill="#2f7de9" /></Art></TaskButton>
    <TaskButton $running><Art w={30}><path d="M22.500 0 22.500 8.500 4 22.500 0 19.500z" fill="#0065a9" /><path d="M4 7.500 22.500 22V30L0 10.500z" fill="#1384cc" /><path d="m22.500 0 6.500 3c.7.400 1 .9 1 1.700v20.600c0 .8-.3 1.300-1 1.700l-6.500 3c-.8.300-1.500.1-2-.5 1 .5 2-.2 2-1.500V2c0-1.300-1-2-2-1.500.5-.6 1.200-.8 2-.5z" fill="#2aaaf4" /></Art></TaskButton>
    <TaskButton $running>
      <Art w={30}><path d="M1.500 28.500 3.500 21.500A13 13 0 1 1 8.500 26.500z" fill="#e6eef0" stroke="#1d8754" strokeWidth="2.6" strokeLinejoin="round" /><path d="M10 8c1-.6 2-.3 2.300.5l1 2.500c.2.600-.9 1.600-1 2.300.9 2 2.400 3.300 4.500 4.200.8-.2 1.500-1.600 2.200-1.400l2.600 1.300c.8.500.6 1.800-.2 2.600-1.600 1.600-4 1.600-7 0-3-1.600-5.300-4-6-7C8 11 8.500 9 10 8z" fill="#1d8754" /></Art>
      <Badge>9</Badge>
    </TaskButton>
    <TaskButton $running><Art w={30} h={28}><path d="M8 0h21v7H8z" fill="#41a5ee" /><path d="M7 7h22v7H7z" fill="#2b7cd3" /><path d="M7 14h22v7H7z" fill="#185abd" /><path d="M7 21h22v7H8z" fill="#103f91" /><rect y="6.5" width="15" height="15.5" rx="1.2" fill="#185abd" /><text x="7.5" y="18.5" fontSize="11.5" fontWeight="bold" textAnchor="middle" fontFamily="Open Sans" fill="#fff">W</text></Art></TaskButton>
    <Spacer />
    <Slot $w={40}><Line w={14} h={9} sw={1.7}><path d="M1 7.500 7 1.500l6 6" /></Line></Slot>
    <Slot $w={40}><Line w={22} h={16} sw={1.4}><path d="M5 14.500a4 4 0 0 1 0-8C6 3 8.500 1.200 11.500 1.200c2.800 0 5 1.800 5.600 4.300a4.500 4.500 0 0 1 0 9z" fill="#929292" /><path d="m5 14 9-7c3-1.500 6 1 6 3.500 0 2-1.500 3.500-3.500 3.500z" fill="#eee" stroke="none" /></Line></Slot>
    <Slot $w={40}><Line w={22} sw={1.4}><path d="M1.500 10.500C1.500 5 5.500 2 10 2c4 0 7 2 8.500 5M19.500 1.500V7h-6M2 20.500V15h5.500M2.500 16.500c1.500 2 4 3.500 7 3.500" /><circle cx="16.5" cy="16" r="5.2" fill="#f7941d" stroke="none" /></Line></Slot>
    <Language>ENG<br />IN</Language>
    <Slot $w={43}><Line w={20} h={16} sw={1.5}><path d="M1 5.500C6-.3 14-.3 19 5.500M3.800 8.500c3.600-4 8.800-4 12.400 0M6.700 11.300c2-2 4.600-2 6.600 0" /><circle cx="10" cy="13.8" r="1.3" fill="#111" /></Line></Slot>
    <Slot $w={18}><Line w={20} h={18} sw={1.3}><path d="M1 6h3.500L9.500 1.500v15L4.500 12H1zM12 6c1.300 1.800 1.300 4.200 0 6M14.500 3.500c2.700 3.200 2.700 7.800 0 11M17 1c4 4.700 4 11.300 0 16" /></Line></Slot>
    <Slot $w={42}><Line w={20} h={12} sw={1.5}><rect x="1" y="1" width="15.5" height="10" rx="2.5" /><path d="M3.200 3.200h5v5.600h-5z" fill="#111" stroke="none" /><path d="M18.500 4.500v3" /></Line></Slot>
    <Clock><span>15:59</span><span>19-12-2023</span></Clock>
    <Slot $w={38} $mr={16}><Art w={16} h={20}><path d="M8 .5c4 0 6.200 2.700 6.200 6.300v5L16 14.500v1H0v-1l1.800-2.700v-5C1.800 3.200 4 .5 8 .5zM5 17h6c-.2 1.500-1.500 2.500-3 2.500S5.200 18.500 5 17z" fill="#003e92" /></Art></Slot>
  </Taskbar>
);

export default function App() {
  return (
    <>
      <GlobalStyle />
      <Screen>
        <BrowserTabs />
        <BrowserToolbar />
        <Workspace>
          <WebPage />
          <EdgeSidebar />
        </Workspace>
        <WindowsTaskbar />
      </Screen>
    </>
  );
}
